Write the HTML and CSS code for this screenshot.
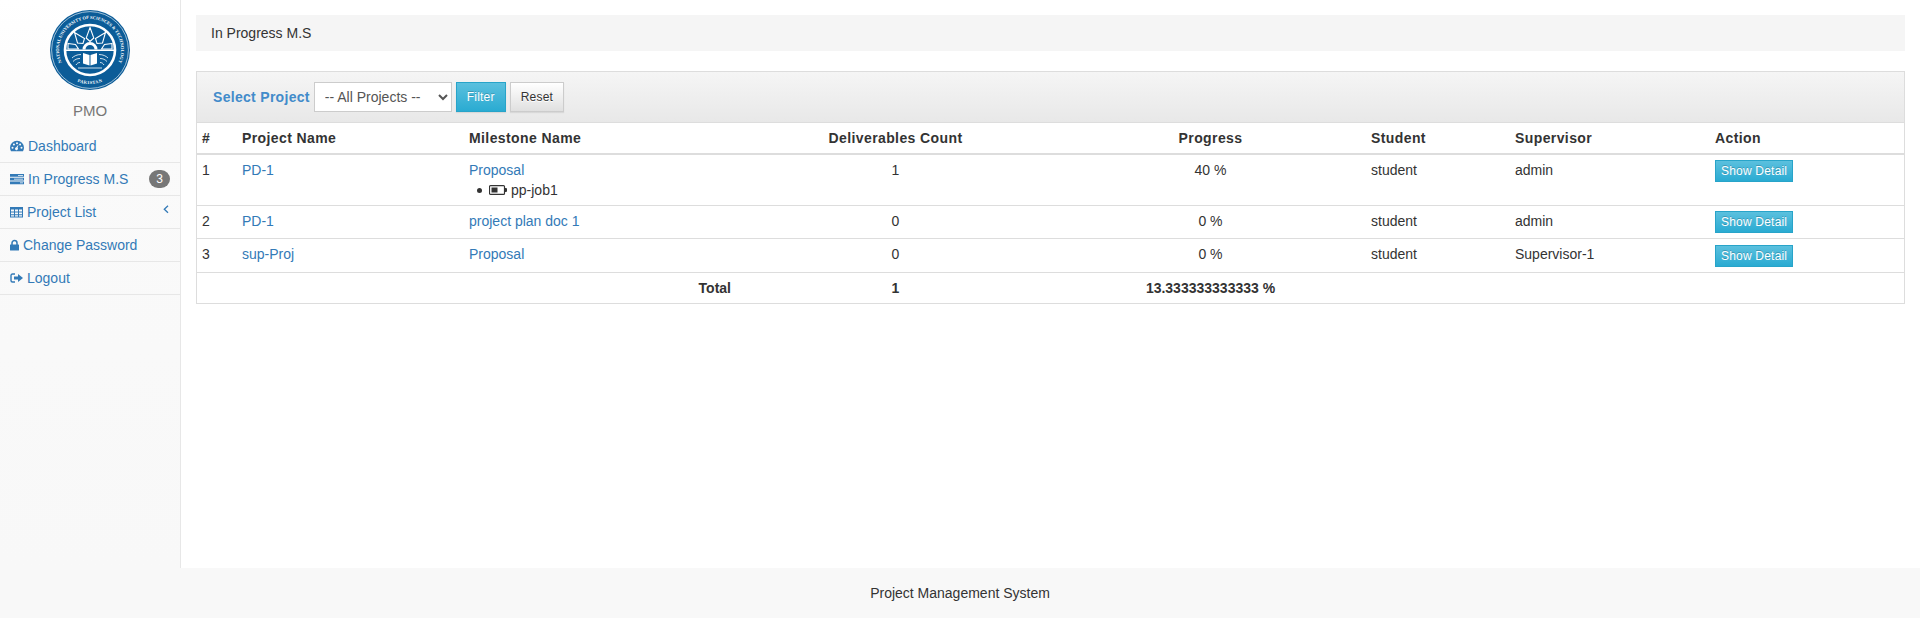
FILE: index.html
```html
<!DOCTYPE html>
<html lang="en">
<head>
<meta charset="UTF-8">
<meta name="viewport" content="width=device-width, initial-scale=1.0">
<title>In Progress M.S</title>
<link rel="stylesheet" href="styles.css">
</head>
<body>
<div class="wrapper">
  <div class="sidebar">
    <div class="brand">
      <svg class="seal" viewBox="0 0 80 80" width="80" height="80">
        <defs>
          <path id="seal-top" d="M14 56.800A31 31 0 1 1 66 56.800"/>
          <path id="seal-bottom" d="M14 62A34 34 0 0 0 66 62"/>
        </defs>
        <circle cx="40" cy="40" r="40" fill="#0b5c98"/>
        <circle cx="40" cy="40" r="38.400" fill="none" stroke="#fff" stroke-width=".6"/>
        <text class="seal-text"><textPath href="#seal-top" startOffset="50%" text-anchor="middle">NATIONAL UNIVERSITY OF SCIENCES &amp; TECHNOLOGY</textPath></text>
        <text class="seal-text seal-country"><textPath href="#seal-bottom" startOffset="50%" text-anchor="middle">PAKISTAN</textPath></text>
        <circle cx="40" cy="40" r="25" fill="#0b5c98" stroke="#fff" stroke-width="2.600"/>
        <path fill="none" stroke="#fff" stroke-width="1.100" d="M40 17.500l3.800 10.500-3.800 3.500-3.800-3.500zM24.500 22.500l10 6 -1.500 5-5.500-.5zM55.500 22.500l-10 6 1.500 5 5.500-.5zM18 33.500l7.500 1 3 4.500H18zM62 33.500l-7.500 1-3 4.500H62z"/>
        <path fill="#fff" d="M32.500 39.500a7.500 7.500 0 0 1 15 0h-3a4.500 4.500 0 0 0-9 0z"/>
        <path fill="#fff" d="M16 39.500h48v1.400H16z"/>
        <path fill="#fff" d="M33 43l6.500 2v10.500l-6.500-2zM47 43l-6.500 2v10.500l6.500-2z"/>
        <path fill="none" stroke="#fff" stroke-width=".8" d="M31 44.500c-4 0-7 1.500-9 3.500M30 48.500c-3 0-5 1-7 3M30 52.500c-2 0-3 1-4 2.500M49 44.500c4 0 7 1.500 9 3.500M50 48.500c3 0 5 1 7 3M50 52.500c2 0 3 1 4 2.500M28 58h24"/>
      </svg>
      <div class="brand-name">PMO</div>
    </div>
    <ul class="side-menu">
      <li><a href="#">
        <svg class="ico" viewBox="0 0 14 14" width="14" height="14"><path fill="#337ab7" fill-rule="evenodd" d="M7 1.800a7 7 0 0 1 7 7c0 1.300-.4 2.500-1 3.500H1c-.6-1-1-2.200-1-3.500a7 7 0 0 1 7-7zM2.500 7.800a1 1 0 1 0 0 2 1 1 0 0 0 0-2zM3.900 4.500a1 1 0 1 0 0 2 1 1 0 0 0 0-2zM7 3.300a1 1 0 1 0 0 2 1 1 0 0 0 0-2zM10.100 4.500a1 1 0 1 0 0 2 1 1 0 0 0 0-2zM11.500 7.800a1 1 0 1 0 0 2 1 1 0 0 0 0-2zM8.500 5.400L6.300 8.300a1.400 1.400 0 1 0 1.300.5z"/></svg>
        Dashboard</a></li>
      <li><a href="#">
        <svg class="ico" viewBox="0 0 14 14" width="14" height="14"><path fill="#337ab7" d="M0 2h14v2.800H0zM0 5.700h14v2.800H0zM0 9.400h14v2.800H0z"/><path fill="#fff" d="M8 3.100h5v.7H8zM4 6.800h9v.7H4zM10 10.500h3v.7h-3z"/></svg>
        In Progress M.S<span class="badge">3</span></a></li>
      <li><a href="#">
        <svg class="ico" viewBox="0 0 13 14" width="13" height="14"><path fill="#337ab7" fill-rule="evenodd" d="M0 2h13v10.500H0zM1 4.500v2h3v-2zM5 4.500v2h3v-2zM9 4.500v2h3v-2zM1 7.500v1.800h3V7.500zM5 7.500v1.800h3V7.500zM9 7.500v1.800h3V7.500zM1 10.200v1.300h3v-1.300zM5 10.200v1.300h3v-1.300zM9 10.200v1.300h3v-1.300z"/></svg>
        Project List<svg class="angle" viewBox="0 0 6 9" width="6" height="9"><path fill="none" stroke="#337ab7" stroke-width="1.300" d="M5 .8L1.300 4.300 5 7.800"/></svg></a></li>
      <li><a href="#">
        <svg class="ico" viewBox="0 0 9 14" width="9" height="14"><path fill="none" stroke="#337ab7" stroke-width="1.500" d="M2 7V5a2.500 2.500 0 0 1 5 0v2"/><path fill="#337ab7" d="M.5 6.500h8a.5.500 0 0 1 .5.500v5a.5.500 0 0 1-.5.500h-8a.5.500 0 0 1-.5-.5V7a.5.500 0 0 1 .5-.5z"/></svg>
        Change Password</a></li>
      <li><a href="#">
        <svg class="ico" viewBox="0 0 13 14" width="13" height="14"><path fill="none" stroke="#337ab7" stroke-width="1.400" d="M5 3H2.500A1.500 1.500 0 0 0 1 4.500v5A1.500 1.500 0 0 0 2.500 11H5"/><path fill="#337ab7" d="M4 5.500h4V3l5 4-5 4V8.500H4z"/></svg>
        Logout</a></li>
    </ul>
  </div>

  <div class="content">
    <div class="breadcrumb">In Progress M.S</div>
    <div class="panel">
      <div class="panel-heading">
        <label class="filter-label">Select Project</label>
        <select class="project-select"><option>-- All Projects --</option></select>
        <button class="btn btn-info btn-sm">Filter</button>
        <button class="btn btn-default btn-sm">Reset</button>
      </div>
      <table class="grid">
        <colgroup>
          <col class="c-num"><col class="c-proj"><col class="c-mile"><col class="c-deliv">
          <col class="c-prog"><col class="c-stud"><col class="c-sup"><col>
        </colgroup>
        <thead>
          <tr>
            <th>#</th>
            <th>Project Name</th>
            <th>Milestone Name</th>
            <th class="center">Deliverables Count</th>
            <th class="center">Progress</th>
            <th>Student</th>
            <th>Supervisor</th>
            <th>Action</th>
          </tr>
        </thead>
        <tbody>
          <tr>
            <td>1</td>
            <td><a href="#">PD-1</a></td>
            <td><a href="#">Proposal</a>
              <ul class="jobs">
                <li><svg class="battery" viewBox="0 0 18 10" width="18" height="10"><path fill="none" stroke="#333" stroke-width="1.200" d="M1.500.6h13a1 1 0 0 1 1 1v6.800a1 1 0 0 1-1 1h-13a1 1 0 0 1-1-1V1.600a1 1 0 0 1 1-1z"/><path fill="#333" d="M2.500 2.500h6v5h-6zM16 3h1a1 1 0 0 1 1 1v2a1 1 0 0 1-1 1h-1z"/></svg>pp-job1</li>
              </ul>
            </td>
            <td class="center">1</td>
            <td class="center">40 %</td>
            <td>student</td>
            <td>admin</td>
            <td><button class="btn btn-info btn-xs">Show Detail</button></td>
          </tr>
          <tr>
            <td>2</td>
            <td><a href="#">PD-1</a></td>
            <td><a href="#">project plan doc 1</a></td>
            <td class="center">0</td>
            <td class="center">0 %</td>
            <td>student</td>
            <td>admin</td>
            <td><button class="btn btn-info btn-xs">Show Detail</button></td>
          </tr>
          <tr class="row-last">
            <td>3</td>
            <td><a href="#">sup-Proj</a></td>
            <td><a href="#">Proposal</a></td>
            <td class="center">0</td>
            <td class="center">0 %</td>
            <td>student</td>
            <td>Supervisor-1</td>
            <td><button class="btn btn-info btn-xs">Show Detail</button></td>
          </tr>
          <tr class="total">
            <td colspan="3" class="right">Total</td>
            <td class="center">1</td>
            <td class="center">13.333333333333 %</td>
            <td colspan="3"></td>
          </tr>
        </tbody>
      </table>
    </div>
  </div>

  <div class="footer">Project Management System</div>
</div>
</body>
</html>
```

FILE: styles.css
```css
* {
  box-sizing: border-box;
}
body {
  margin: 0;
  font-family: "Liberation Sans", Arial, sans-serif;
  font-size: 14px;
  line-height: 20px;
  color: #333;
  background: #fff;
}
a {
  color: #337ab7;
  text-decoration: none;
}
.wrapper {
  display: grid;
  grid-template-columns: 181px 1fr;
  grid-template-rows: 568px 50px;
  height: 618px;
  overflow: hidden;
}

/* sidebar */
.sidebar {
  background: linear-gradient(to bottom, #fff 0, #fafafa 130px, #f8f8f8 100%);
  border-right: 1px solid #e7e7e7;
}
.brand {
  height: 130px;
  padding-top: 10px;
  text-align: center;
}
.seal {
  display: block;
  margin: 0 auto;
}
.seal-text {
  font-size: 4.500px;
  font-family: "Liberation Serif", serif;
  font-weight: bold;
  fill: #fff;
}
.seal-country {
  letter-spacing: .4px;
}
.brand-name {
  margin-top: 11px;
  font-size: 15px;
  color: #777;
}
.side-menu {
  list-style: none;
  margin: 0;
  padding: 0;
}
.side-menu li {
  border-bottom: 1px solid #e7e7e7;
}
.side-menu a {
  display: flex;
  align-items: center;
  position: relative;
  height: 32px;
  padding-left: 10px;
}
.ico {
  margin-right: 4px;
}
.badge {
  position: absolute;
  right: 10px;
  top: 7px;
  width: 21px;
  height: 18px;
  border-radius: 10px;
  background: #777;
  color: #fff;
  font-size: 12px;
  line-height: 18px;
  text-align: center;
}
.angle {
  position: absolute;
  right: 11px;
  top: 9px;
}

/* content */
.content {
  padding: 15px 15px 0;
}
.breadcrumb {
  height: 36px;
  padding: 8px 15px;
  margin-bottom: 20px;
  background: #f5f5f5;
}
.panel {
  border: 1px solid #ddd;
}
.panel-heading {
  display: flex;
  align-items: center;
  height: 51px;
  padding: 0 16px;
  background: linear-gradient(to bottom, #f5f5f5 0, #e8e8e8 100%);
  border-bottom: 1px solid #ddd;
}
.filter-label {
  font-weight: bold;
  color: #428bca;
  letter-spacing: .3px;
  margin-right: 4px;
}
.project-select {
  width: 138px;
  height: 30px;
  padding: 0 6px;
  margin-right: 4px;
  font-family: inherit;
  font-size: 14px;
  color: #555;
  background: #fff;
  border: 1px solid #ccc;
  border-radius: 0;
}
.btn {
  font-family: inherit;
  border: 1px solid;
  border-radius: 0;
  font-size: 12px;
  cursor: pointer;
}
.btn-sm {
  height: 30px;
  padding: 0 10px;
  margin-right: 4px;
  line-height: 18px;
  letter-spacing: .2px;
  box-shadow: 0 1px 1px rgba(0, 0, 0, 0.075);
}
.btn-xs {
  height: 22px;
  padding: 0 5px;
  line-height: 18px;
  letter-spacing: .2px;
  display: block;
}
.btn-info {
  color: #fff;
  text-shadow: 0 -1px 0 rgba(0, 0, 0, 0.2);
  background: linear-gradient(to bottom, #5bc0de 0, #2aabd2 100%);
  border-color: #28a4c9;
}
.btn-default {
  color: #333;
  text-shadow: 0 1px 0 #fff;
  background: linear-gradient(to bottom, #fff 0, #e0e0e0 100%);
  border-color: #ccc;
}

/* table */
.grid {
  width: 100%;
  border-collapse: collapse;
  table-layout: fixed;
}
.c-num { width: 40px; }
.c-proj { width: 227px; }
.c-mile { width: 272px; }
.c-deliv { width: 319px; }
.c-prog { width: 311px; }
.c-stud { width: 144px; }
.c-sup { width: 200px; }
.grid th,
.grid td {
  padding: 5px;
  text-align: left;
  vertical-align: top;
  border-top: 1px solid #ddd;
}
.grid th {
  border-top: 0;
  border-bottom: 2px solid #ddd;
  letter-spacing: .4px;
}
.grid thead + tbody tr:first-child td {
  border-top: 0;
}
.grid .center {
  text-align: center;
}
.grid .right {
  text-align: right;
}
.grid .row-last td:last-child {
  padding-top: 6px;
}
.total td {
  font-weight: bold;
}
.jobs {
  list-style: none;
  margin: 0;
  padding: 0;
}
.jobs li {
  display: flex;
  align-items: center;
}
.jobs li::before {
  content: "";
  width: 5px;
  height: 5px;
  margin: 0 7px 0 8px;
  border-radius: 50%;
  background: #333;
}
.battery {
  margin-right: 4px;
}
.footer {
  grid-column: 1 / 3;
  padding-top: 15px;
  text-align: center;
  background: #f8f8f8;
}
```
